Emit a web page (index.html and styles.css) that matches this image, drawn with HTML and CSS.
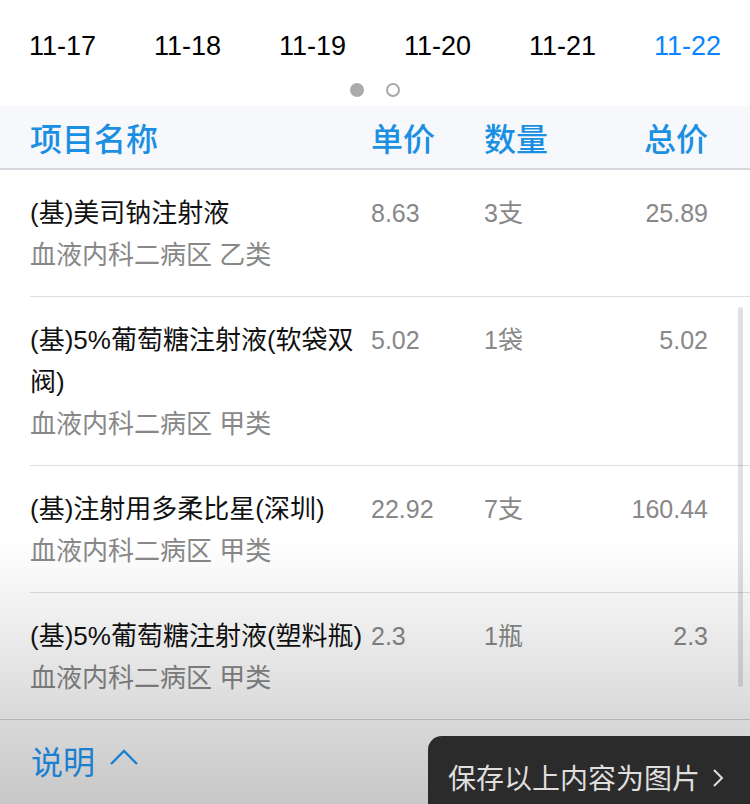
FILE: index.html
```html
<!DOCTYPE html>
<html lang="zh">
<head>
<meta charset="utf-8">
<link rel="stylesheet" href="styles.css">
</head>
<body>
<div class="page">
  <div class="dates">
    <span class="date">11-17</span>
    <span class="date">11-18</span>
    <span class="date">11-19</span>
    <span class="date">11-20</span>
    <span class="date">11-21</span>
    <span class="date active">11-22</span>
  </div>
  <div class="dots">
    <span class="dot filled"></span>
    <span class="dot"></span>
  </div>
  <div class="thead">
    <span class="th th-name">项目名称</span>
    <span class="th">单价</span>
    <span class="th">数量</span>
    <span class="th th-total">总价</span>
  </div>
  <div class="rows">
    <div class="row">
      <div class="name">(基)美司钠注射液<div class="sub">血液内科二病区 乙类</div></div>
      <div class="num">8.63</div>
      <div class="num">3支</div>
      <div class="num total">25.89</div>
    </div>
    <div class="row">
      <div class="name">(基)5%葡萄糖注射液(软袋双阀)<div class="sub">血液内科二病区 甲类</div></div>
      <div class="num">5.02</div>
      <div class="num">1袋</div>
      <div class="num total">5.02</div>
    </div>
    <div class="row">
      <div class="name">(基)注射用多柔比星(深圳)<div class="sub">血液内科二病区 甲类</div></div>
      <div class="num">22.92</div>
      <div class="num">7支</div>
      <div class="num total">160.44</div>
    </div>
    <div class="row last">
      <div class="name">(基)5%葡萄糖注射液(塑料瓶)<div class="sub">血液内科二病区 甲类</div></div>
      <div class="num">2.3</div>
      <div class="num">1瓶</div>
      <div class="num total">2.3</div>
    </div>
  </div>
  <div class="footer">
    <div class="explain">说明
      <svg class="chev" width="30" height="18" viewBox="0 0 30 18"><path d="M2 16 L15 3 L28 16" fill="none" stroke="#1a80cf" stroke-width="2.4"/></svg>
    </div>
    <div class="save">保存以上内容为图片
      <svg class="arrow" width="12" height="20" viewBox="0 0 12 20"><path d="M2 2 L10 10 L2 18" fill="none" stroke="#dedede" stroke-width="2"/></svg>
    </div>
  </div>
  <div class="fade"></div>
  <div class="scrollbar"></div>
</div>
</body>
</html>
```

FILE: styles.css
```css
html, body {
  margin: 0;
  padding: 0;
  background: #ffffff;
}
.page {
  position: relative;
  width: 750px;
  height: 804px;
  overflow: hidden;
  font-family: "Liberation Sans", "Noto Sans CJK SC", sans-serif;
  color: #111;
}
.dates {
  display: grid;
  grid-template-columns: repeat(6, 125px);
  padding-top: 28px;
  padding-bottom: 12px;
  line-height: 36px;
  font-size: 27px;
  text-align: center;
  color: #000;
}
.date.active {
  color: #0a84ff;
}
.dots {
  height: 30px;
  display: flex;
  justify-content: center;
  align-items: center;
  gap: 22px;
  padding-bottom: 2px;
  box-sizing: border-box;
}
.dot {
  width: 14px;
  height: 14px;
  border-radius: 50%;
  box-sizing: border-box;
  border: 2px solid #a9a9a9;
  background: #fff;
}
.dot.filled {
  background: #ababab;
  border-color: #ababab;
}
.thead {
  display: grid;
  grid-template-columns: 371px 113px 113px 111px;
  height: 62px;
  align-items: center;
  background: #f6f8fc;
  border-bottom: 2px solid #d6d8dd;
  font-size: 32px;
  font-weight: 500;
  color: #1b8fe2;
}
.th-name {
  padding-left: 30px;
}
.th-total {
  text-align: right;
}
.row {
  display: grid;
  grid-template-columns: 341px 113px 113px 111px;
  margin-left: 30px;
  padding: 22px 0 20px;
  border-bottom: 1px solid #dedede;
  font-size: 26px;
  line-height: 42px;
}
.row.last {
  border-bottom: none;
}
.name {
  color: #111;
  padding-right: 4px;
}
.sub {
  color: #888;
}
.num {
  color: #888;
  font-size: 25px;
}
.num.total {
  text-align: right;
}
.footer {
  position: relative;
  z-index: 3;
  display: flex;
  justify-content: space-between;
  height: 85px;
  border-top: 1px solid #b4b4b4;
}
.explain {
  display: flex;
  align-items: center;
  gap: 14px;
  padding-left: 31px;
  height: 80px;
  font-size: 32px;
  color: #1a80cf;
}
.chev {
  margin-top: -6px;
}
.save {
  align-self: flex-end;
  display: flex;
  align-items: center;
  gap: 12px;
  width: 322px;
  height: 69px;
  box-sizing: border-box;
  padding: 12px 0 0 20px;
  background: #2b2b2b;
  border-top-left-radius: 14px;
  color: #dedede;
  font-size: 28px;
  white-space: nowrap;
}
.arrow {
  margin-top: 2px;
}
.fade {
  position: absolute;
  left: 0;
  right: 0;
  top: 540px;
  bottom: 0;
  z-index: 2;
  pointer-events: none;
  background: linear-gradient(to bottom, rgba(0,0,0,0) 0%, rgba(0,0,0,0.22) 100%);
}
.scrollbar {
  position: absolute;
  left: 738px;
  top: 307px;
  width: 5px;
  height: 380px;
  border-radius: 3px;
  background: rgba(0,0,0,0.12);
  z-index: 4;
}
```
